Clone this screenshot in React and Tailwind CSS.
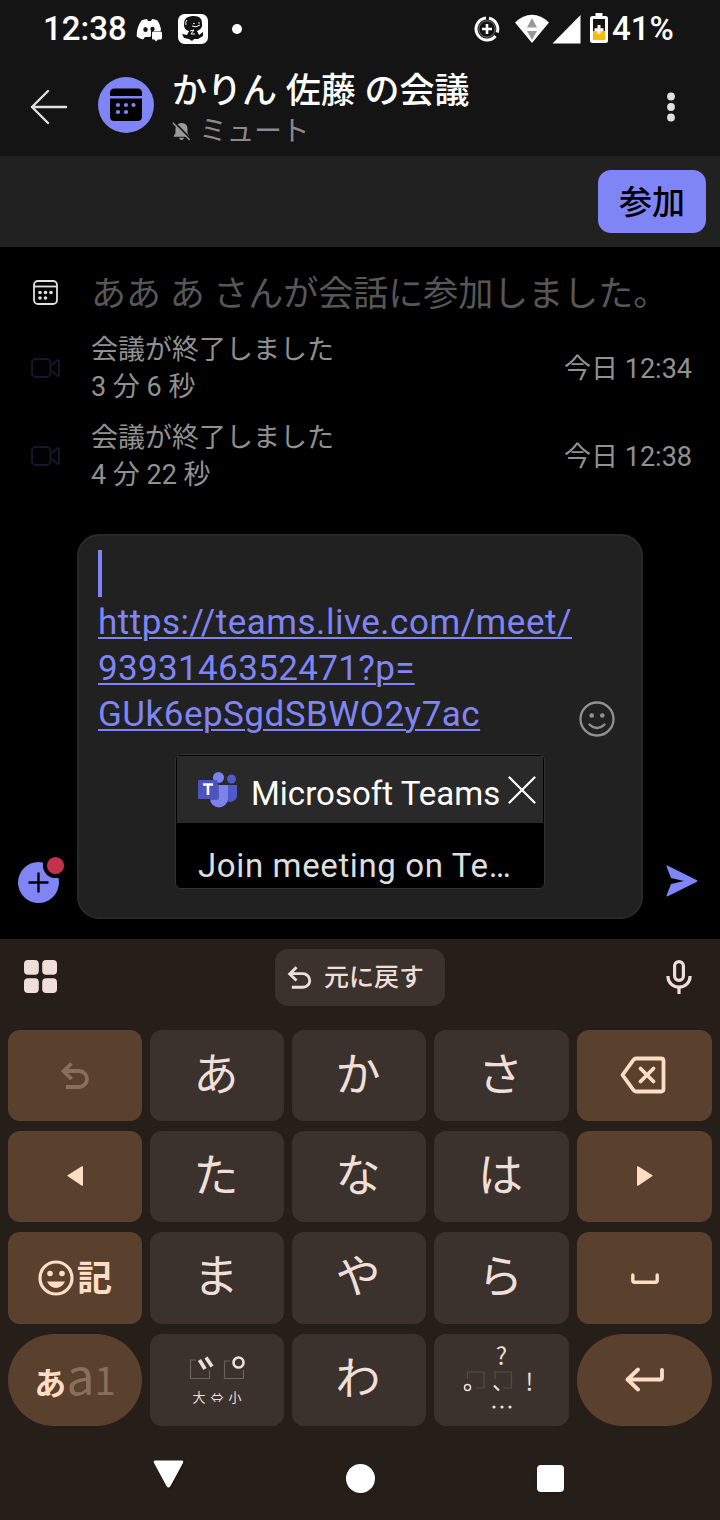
import React from "react";

const JP = "font-[Roboto,'Noto_Sans_CJK_JP',sans-serif]";

function StatusBar() {
  return (
    <div className="flex h-[58px] items-center pl-[43px] text-white">
      <span className="w-[93px] text-[33px] font-medium leading-[58px]">12:38</span>
      <svg className="mt-[2px] h-[24px] w-[28px]" viewBox="0 0 28 24" fill="#fff">
        <path d="M5.500 2.500Q8 1.200 11 1L12 3H15L16 1Q19 1.200 21.500 2.500Q24 6 25 11L24.500 13H15V18L14 19H9L7 21.500Q3 20.500 .7 18.500Q.5 9 5.500 2.500Z" />
        <ellipse cx="9.500" cy="11.500" rx="2.200" ry="2.500" fill="#141414" />
        <ellipse cx="16.500" cy="11" rx="2.200" ry="2.200" fill="#141414" />
        <path d="M17 13.500H24.500Q26 13.500 26 15V20Q26 21.500 24.500 21.500H22L20 23.500L18.500 21.500H17Q16 21.500 16 20V14.500Z" />
      </svg>
      <svg className="ml-[14px] h-[30px] w-[30px]" viewBox="0 0 30 30">
        <rect width="30" height="30" rx="6.500" fill="#fff" />
        <path d="M6 11Q5 3 14 2Q24 1 24 9Q25 15 19 17L21 21L25 18V22L20 25H16L14 27L11 25L6 24L4 20L9 21L11 17Q6 16 6 11Z" fill="#111" />
        <path d="M14 12Q18 14 22 11M12 17L16 16L13 20H17M9 6Q7 8 8 11" stroke="#fff" strokeWidth="1" fill="none" />
        <circle cx="16" cy="9.500" r=".8" fill="#fff" />
        <circle cx="21" cy="9" r=".8" fill="#fff" />
      </svg>
      <span className="ml-[24px] h-[10px] w-[10px] rounded-full bg-white" />
      <svg className="ml-[232px] h-[26px] w-[26px]" viewBox="0 0 26 26" fill="none" stroke="#fff">
        <path d="M12 2A11 11 0 1 0 21.500 20M15 2.200A11 11 0 0 1 23.200 16.500" strokeWidth="3" />
        <circle cx="13" cy="13" r="8.200" stroke="#777" strokeWidth="1" />
        <path d="M13 8V18M8 13H18" strokeWidth="2.600" />
      </svg>
      <svg className="ml-[14px] h-[30px] w-[36px]" viewBox="0 0 36 30">
        <path d="M1 8.500Q9 .8 18 .8T35 8.500L18 29Z" fill="#fff" />
        <path d="M18 4L23 13.500H13ZM13 17H23L18 26Z" fill="#999" />
      </svg>
      <svg className="ml-[2px] h-[30px] w-[29px]" viewBox="0 0 29 30">
        <path d="M28.500 1V29.500H.5Z" fill="#fff" />
      </svg>
      <svg className="ml-[9px] mb-[2px] h-[30px] w-[18px]" viewBox="0 0 18 30">
        <path d="M5.500 0H12.500V3H15.500Q18 3 18 5.500V27.500Q18 30 15.500 30H2.500Q0 30 0 27.500V5.500Q0 3 2.500 3H5.500Z" fill="#fff" />
        <path d="M3 6H15V18H3Z" fill="#141414" />
        <path d="M3 18H15V27H3Z" fill="#fbbc05" />
        <path d="M7.500 12H10.500V15.200H13.500V18.200H10.500V21H7.500V18.200H4.500V15.200H7.500Z" fill="#fff" />
      </svg>
      <span className="ml-[4px] text-[33px] font-medium leading-[58px]">41%</span>
    </div>
  );
}

function Header() {
  return (
    <div className="flex h-[98px] items-start pl-[30px]">
      <svg className="mt-[31px] h-[36px] w-[38px]" viewBox="0 0 38 36" fill="none" stroke="#e0e0e0" strokeWidth="2.400" strokeLinecap="round" strokeLinejoin="round">
        <path d="M36 18H2M18 2L2 18L18 34" />
      </svg>
      <svg className="ml-[30px] mt-[19px] h-[56px] w-[56px]" viewBox="0 0 56 56">
        <circle cx="28" cy="28" r="28" fill="#7f85f5" />
        <path d="M12 19V16Q12 11.500 16.500 11.500H39.500Q44 11.500 44 16V19ZM12 21.500H44V39.500Q44 44 39.500 44H16.500Q12 44 12 39.500Z" fill="#000" />
        <g fill="#7f85f5">
          <circle cx="20" cy="28" r="2.100" />
          <circle cx="28" cy="28" r="2.100" />
          <circle cx="35.500" cy="28" r="2.100" />
          <circle cx="20" cy="35" r="2.100" />
          <circle cx="28" cy="35" r="2.100" />
        </g>
      </svg>
      <div className="ml-[18px] mt-[11px] flex flex-col">
        <span className="h-[44px] whitespace-nowrap text-[35px] font-medium leading-[46px] text-white">かりん 佐藤 の会議</span>
        <span className="flex h-[38px] items-center text-[28px] leading-[38px] tracking-[-0.5px] text-[#8a8a8a]">
          <svg className="mb-[2px] mr-[8px] h-[19px] w-[19px]" viewBox="0 0 19 19">
            <path d="M9.500 1Q15.500 1 15.500 7V11L17.500 14.800H1.500L3.500 11V7Q3.500 1 9.500 1ZM7 15.800H12Q11.500 18 9.500 18T7 15.800Z" fill="#9a9a9a" />
            <path d="M2 0L19 17.500" stroke="#141414" strokeWidth="2" />
            <path d="M.8 .8L17.800 18" stroke="#9a9a9a" strokeWidth="1.400" />
          </svg>
          ミュート
        </span>
      </div>
      <svg className="ml-[197px] mt-[34px] h-[30px] w-[10px]" viewBox="0 0 10 30" fill="#e0e0e0">
        <circle cx="5" cy="4.500" r="3.900" />
        <circle cx="5" cy="15" r="3.900" />
        <circle cx="5" cy="25.500" r="3.900" />
      </svg>
    </div>
  );
}

function CallRow({ duration, time }) {
  return (
    <div className="flex h-[88px] items-center pl-[30px] pr-[28px] text-[27px] leading-[37px] text-[#919191]">
      <svg className="mb-[3px] h-[22px] w-[31px]" viewBox="0 0 31 22" fill="none" stroke="#0f1a2b" strokeWidth="2" strokeLinejoin="round">
        <rect x="2" y="2" width="18.500" height="18" rx="4" />
        <path d="M20.500 8.500L27 3.500Q29 2.500 29 4.500V17.500Q29 19.500 27 18.500L20.500 13.500" />
      </svg>
      <div className="ml-[30px] flex flex-1 flex-col">
        <span>会議が終了しました</span>
        <span>{duration}</span>
      </div>
      <span>{time}</span>
    </div>
  );
}

function TeamsLogo() {
  return (
    <svg className="h-[36px] w-[40px]" viewBox="0 0 40 36">
      <circle cx="33.500" cy="7" r="4.500" fill="#5059c9" />
      <path d="M28 13H39V23.500A6.500 6.500 0 0 1 28 28Z" fill="#5059c9" />
      <circle cx="20.500" cy="5.500" r="5.500" fill="#7b83eb" />
      <path d="M12 13H30V26.500A9 9 0 0 1 12 26.500Z" fill="#7b83eb" />
      <path d="M12 10H21V26Q21 28 19 28H12Z" fill="#3e449d" opacity=".6" />
      <rect y="8" width="19.500" height="19" rx="1" fill="#4b53bc" />
      <path d="M5 12.500H15M10 12.500V23" stroke="#fff" strokeWidth="2.600" />
    </svg>
  );
}

function Composer() {
  return (
    <div className="flex h-[405px] items-start pl-[18px]">
      <svg className="mt-[321px] h-[50px] w-[50px]" viewBox="0 0 50 50">
        <circle cx="20.500" cy="27.500" r="20.500" fill="#7f85f5" />
        <path d="M20.500 18.500V36.500M11.500 27.500H29.500" stroke="#000" strokeWidth="2.400" strokeLinecap="round" />
        <circle cx="37.500" cy="10.500" r="12.600" fill="#000" />
        <circle cx="37.500" cy="10.500" r="8.600" fill="#c4314b" />
      </svg>
      <div className="ml-[9px] flex h-[385px] w-[566px] rounded-[22px] border-2 border-[#292929] bg-[#212121] pl-[19px] pt-[14px]">
        <div className="flex w-[482px] flex-col">
          <span className="h-[47px] w-[4px] bg-[#7f85f5]" />
          <p className="mt-[3px] flex flex-col whitespace-nowrap text-[35px] leading-[46px] tracking-[0.35px] text-[#7f85f5] underline decoration-[1.500px] underline-offset-[3px]">
            <span className="self-start tracking-[0.530px]">https://teams.live.com/meet/</span>
            <span className="self-start">9393146352471?p=</span>
            <span className="self-start tracking-[0.490px]">GUk6epSgdSBWO2y7ac</span>
          </p>
          <div className="ml-[77px] mt-[16px] flex h-[135px] w-[370px] flex-col rounded-[6px] border border-[#333] bg-black px-px pt-px text-[33px]">
            <div className="flex h-[67px] items-center bg-[#292929] pl-[21px]">
              <TeamsLogo />
              <span className="ml-[13px] mt-[8px] w-[257px] whitespace-nowrap leading-[40px] tracking-[0.02px] text-white">Microsoft Teams</span>
              <svg className="h-[28px] w-[28px]" viewBox="0 0 28 28" stroke="#fff" strokeWidth="2.200" strokeLinecap="round">
                <path d="M1.500 1.500L26.500 26.500M26.500 1.500L1.500 26.500" />
              </svg>
            </div>
            <span className="mt-[23px] whitespace-nowrap pl-[21px] leading-[40px] tracking-[0.630px] text-[#dedede]">Join meeting on Te…</span>
          </div>
        </div>
        <svg className="-ml-px mt-[151px] h-[36px] w-[36px]" viewBox="0 0 36 36" fill="none" stroke="#919191" strokeWidth="2.300" strokeLinecap="round">
          <circle cx="18" cy="18" r="16.500" />
          <path d="M10.500 23.500Q18 30.500 25.500 23.500" />
          <circle cx="12.700" cy="14.500" r="1.200" fill="#919191" />
          <circle cx="23.300" cy="14.500" r="1.200" fill="#919191" />
        </svg>
      </div>
      <svg className="ml-[23px] mt-[331px] h-[32px] w-[32px]" viewBox="0 0 32 32" fill="#7f85f5">
        <path d="M.6 1.800Q.3 .2 1.800 .7L31 15.200Q32 16 31 16.800L1.800 31.300Q.3 31.800 .6 30.200L5 19L18 16L5 13Z" />
      </svg>
    </div>
  );
}

function UndoIcon({ className, width }) {
  return (
    <svg className={className} viewBox="0 0 28 27" fill="none" stroke="currentColor" strokeWidth={width}>
      <path d="M10.500 1.500L2.500 9.300L10.500 17M2.500 9H18A8 8 0 0 1 18 25H5" />
    </svg>
  );
}

function Key({ children, accent, pill }) {
  return (
    <div
      className={
        "flex items-center justify-center text-[45px] leading-none " +
        (accent ? "bg-[#59412e] text-[#ffdcc4] " : "bg-[#3b322d] text-[#efdfd8] ") +
        (pill ? "rounded-[46px]" : "rounded-[12px]")
      }
    >
      {children}
    </div>
  );
}

function Kana({ children }) {
  return <span className="pr-[2px] leading-[60px]">{children}</span>;
}

function Keyboard() {
  return (
    <div className="flex h-[581px] flex-col bg-[#261e19]">
      <div className="flex h-[91px] items-start text-[#efdfd8]">
        <svg className="ml-[24px] mt-[21px] h-[33px] w-[33px]" viewBox="0 0 33 33" fill="#efdfd8">
          <rect width="14.800" height="14.800" rx="4" />
          <rect x="18.200" width="14.800" height="14.800" rx="4" />
          <rect y="18.200" width="14.800" height="14.800" rx="4" />
          <rect x="18.200" y="18.200" width="14.800" height="14.800" rx="4" />
        </svg>
        <div className="ml-[218px] mt-[10px] flex h-[57px] w-[170px] items-center rounded-[13px] bg-[#3b322d] pl-[12px] text-[25px] font-medium">
          <UndoIcon className="h-[23px] w-[25px]" width="3.400" />
          <span className="ml-[12px] whitespace-nowrap leading-[36px]">元に戻す</span>
        </div>
        <svg className="ml-[221px] mt-[21px] h-[35px] w-[26px]" viewBox="0 0 26 35" fill="none" stroke="#efdfd8" strokeWidth="3.200">
          <rect x="8.600" y="1.600" width="8.800" height="18.800" rx="4.400" />
          <path d="M2 16V17A11 10 0 0 0 24 17V16M13 27V34" />
        </svg>
      </div>
      <div className="grid grid-cols-[134px_134px_134px_135px_135px] grid-rows-[91px_91px_92px_92px] gap-x-2 gap-y-[10px] px-2">
        <Key accent>
          <UndoIcon className="mb-px h-[27px] w-[28px] text-[#8b6e59]" width="3.800" />
        </Key>
        <Key><Kana>あ</Kana></Key>
        <Key><Kana>か</Kana></Key>
        <Key><Kana>さ</Kana></Key>
        <Key accent>
          <svg className="mb-px mr-[3px] h-[38px] w-[46px]" viewBox="0 0 46 38" fill="none" stroke="currentColor" strokeWidth="3.800" strokeLinejoin="round" strokeLinecap="round">
            <path d="M16 2.500H41Q43.500 2.500 43.500 5V33Q43.500 35.500 41 35.500H16Q14.500 35.500 13.500 34.200L2.500 19L13.500 3.800Q14.500 2.500 16 2.500ZM20.500 12.500L33.500 25.500M33.500 12.500L20.500 25.500" />
          </svg>
        </Key>

        <Key accent>
          <svg className="mb-px h-[20px] w-[16px]" viewBox="0 0 16 20" fill="currentColor">
            <path d="M.5 10Q0 9.600 .6 9.200L14.800 .3Q16 0 16 1V19Q16 20 14.800 19.700Z" />
          </svg>
        </Key>
        <Key><Kana>た</Kana></Key>
        <Key><Kana>な</Kana></Key>
        <Key><Kana>は</Kana></Key>
        <Key accent>
          <svg className="mb-px h-[20px] w-[16px]" viewBox="0 0 16 20" fill="currentColor">
            <path d="M15.500 10Q16 9.600 15.400 9.200L1.200 .3Q0 0 0 1V19Q0 20 1.200 19.700Z" />
          </svg>
        </Key>

        <Key accent>
          <svg className="h-[36px] w-[36px]" viewBox="0 0 36 36" fill="none" stroke="currentColor" strokeWidth="3.200">
            <circle cx="18" cy="18" r="16" />
            <g fill="currentColor" stroke="none">
              <circle cx="12" cy="13.500" r="2.800" />
              <circle cx="24" cy="13.500" r="2.800" />
              <path d="M9 21.500H27Q24 28 18 28T9 21.500Z" />
            </g>
          </svg>
          <span className="ml-[3px] mt-[3px] text-[35px] font-bold leading-[50px]">記</span>
        </Key>
        <Key><Kana>ま</Kana></Key>
        <Key><Kana>や</Kana></Key>
        <Key><Kana>ら</Kana></Key>
        <Key accent>
          <svg className="h-[11px] w-[28px]" viewBox="0 0 28 11" fill="none" stroke="currentColor" strokeWidth="3.400" strokeLinecap="round" strokeLinejoin="round">
            <path d="M1.800 2V7.500Q1.800 9.200 3.500 9.200H24.500Q26.200 9.200 26.200 7.500V2" />
          </svg>
        </Key>

        <Key accent pill>
          <div className="mb-[14px] flex h-[60px] items-baseline font-['Noto_Sans_CJK_JP',sans-serif] leading-[60px]">
            <span className="text-[32px] font-bold leading-[60px]">あ</span>
            <span className="text-[50px] leading-[60px] text-[#8b6e59]">a</span>
            <span className="text-[38px] leading-[60px] text-[#8b6e59]">1</span>
          </div>
        </Key>
        <Key>
          <div className="flex flex-col items-center">
            <svg className="h-[24px] w-[56px]" viewBox="0 0 56 24" fill="none" stroke="#efdfd8">
              <path d="M7 4H1.500V22.500H20.500V14M41 5H35.500V22.500H54.500V14" stroke="#6b605a" strokeWidth="1.200" />
              <path d="M10.500 4L16 13M17 1.500L23 10.500" strokeWidth="3.600" />
              <circle cx="49.500" cy="6.500" r="5" strokeWidth="2.600" />
            </svg>
            <span className="-mb-[3px] mt-[8px] flex gap-[5px] text-[13px] leading-[20px]">
              <span>大</span>
              <span>⇔</span>
              <span>小</span>
            </span>
          </div>
        </Key>
        <Key><Kana>わ</Kana></Key>
        <Key>
          <div className="mb-[8px] flex w-[80px] flex-col items-center font-['Noto_Sans_CJK_JP',sans-serif] text-[24px]">
            <span className="h-[26px] leading-[24px]">?</span>
            <div className="flex h-[24px] w-full items-center">
              <svg className="h-[22px] w-[52px]" viewBox="0 0 52 22" fill="none" stroke="#efdfd8">
                <path d="M5.500 9V2H22V18H13.500M33 9V2H49.500V18H41" stroke="#574d48" strokeWidth="1.200" />
                <circle cx="5.500" cy="17.500" r="3" strokeWidth="1.500" />
                <path d="M32 15.500L37 20.500" strokeWidth="2.200" />
              </svg>
              <span className="ml-[12px] leading-[24px]">!</span>
            </div>
            <svg className="mt-[12px] h-[4px] w-[20px]" viewBox="0 0 20 4" fill="#efdfd8">
              <circle cx="2" cy="2" r="1.600" />
              <circle cx="10" cy="2" r="1.600" />
              <circle cx="18" cy="2" r="1.600" />
            </svg>
          </div>
        </Key>
        <Key accent pill>
          <svg className="mb-px h-[25px] w-[39px]" viewBox="0 0 39 25" fill="none" stroke="currentColor" strokeWidth="3.800" strokeLinecap="round" strokeLinejoin="round">
            <path d="M37 3V10.500Q37 12.500 35 12.500H3M13 2.500L2.500 12.500L13 22.500" />
          </svg>
        </Key>
      </div>
      <div className="flex items-center pl-[152px] pt-[32px]">
        <svg className="mb-[8px] h-[32px] w-[32px] drop-shadow-[1px_1px_1px_rgba(0,0,0,0.4)]" viewBox="0 0 32 32" fill="#fff">
          <path d="M3.500 2.500H29.500Q32 2.500 31 5L18.500 28Q16.500 31 14.500 28L2 5Q1 2.500 3.500 2.500Z" />
        </svg>
        <span className="ml-[162px] h-[29px] w-[29px] rounded-full bg-white shadow" />
        <span className="ml-[162px] h-[27px] w-[27px] rounded-[4px] bg-white shadow" />
      </div>
    </div>
  );
}

export default function App() {
  return (
    <div className={"flex h-[1520px] w-[720px] flex-col overflow-hidden bg-black " + JP} lang="ja">
      <div className="flex flex-col bg-[#141414]">
        <StatusBar />
        <Header />
      </div>
      <div className="flex h-[91px] items-center justify-end bg-[#212121] pr-[14px]">
        <button className="h-[63px] w-[108px] rounded-[13px] bg-[#7f85f5] pt-[2px] text-[33px] font-medium leading-[61px] text-black">参加</button>
      </div>
      <div className="flex h-[287px] flex-col pt-[19px]">
        <div className="flex h-[54px] items-center pl-[33px]">
          <svg className="mb-px h-[25px] w-[25px]" viewBox="0 0 25 25" fill="none" stroke="#e0e0e0" strokeWidth="1.800">
            <rect x="1" y="1" width="23" height="23" rx="4" />
            <path d="M1 6.500H24" />
            <g fill="#e0e0e0" stroke="none">
              <circle cx="7" cy="12.500" r="1.800" />
              <circle cx="12.500" cy="12.500" r="1.800" />
              <circle cx="18" cy="12.500" r="1.800" />
              <circle cx="7" cy="18" r="1.800" />
              <circle cx="12.500" cy="18" r="1.800" />
            </g>
          </svg>
          <span className="ml-[33px] whitespace-nowrap pt-[3px] text-[35px] leading-[54px] text-[#575757]">ああ あ さんが会話に参加しました。</span>
        </div>
        <div className="flex flex-col pt-[5px]">
          <CallRow duration="3 分 6 秒" time="今日 12:34" />
          <CallRow duration="4 分 22 秒" time="今日 12:38" />
        </div>
      </div>
      <Composer />
      <Keyboard />
    </div>
  );
}
